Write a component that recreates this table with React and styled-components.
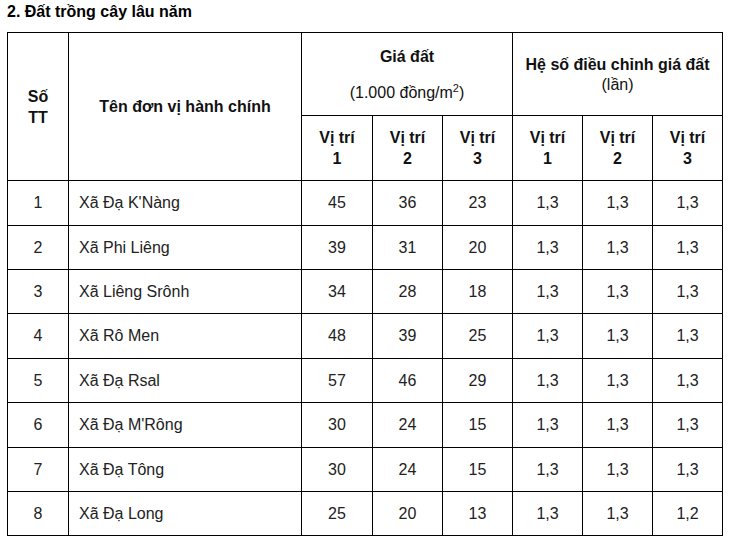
import React from "react";
import styled, { createGlobalStyle } from "styled-components";

const Global = createGlobalStyle`
  html, body { margin: 0; padding: 0; background: #fff; }
  body { font-family: "Liberation Sans", Arial, sans-serif; color: #111; }
`;

const Page = styled.div`
  padding: 3px 7px 0 7px;
`;

const Title = styled.div`
  font-size: 16px;
  font-weight: bold;
  line-height: 18px;
  color: #000;
  margin-bottom: 11px;
`;

const Table = styled.table`
  border-collapse: collapse;
  table-layout: fixed;
  width: 716px;
  font-size: 16px;
  color: #222;
`;

const HeadCell = styled.th`
  border: 1px solid #000;
  font-weight: bold;
  color: #111;
  text-align: center;
  vertical-align: middle;
  line-height: 21px;
  padding: 0;
`;

const Sub = styled.div`
  font-weight: normal;
  line-height: 20px;
  margin-top: ${(p) => p.$gap || 0}px;
`;

const Sup = styled.sup`
  font-size: 11px;
  line-height: 0;
`;

const Row = styled.tr`
  height: ${(p) => p.$h}px;
`;

const Cell = styled.td`
  border: 1px solid #000;
  text-align: ${(p) => (p.$left ? "left" : "center")};
  padding: ${(p) => (p.$left ? "0 0 0 10px" : "0")};
  vertical-align: middle;
  line-height: 18px;
`;

const widths = [61, 233, 71, 70, 70, 70, 70, 70];

const data = [
  ["1", "Xã Đạ K'Nàng", "45", "36", "23", "1,3", "1,3", "1,3"],
  ["2", "Xã Phi Liêng", "39", "31", "20", "1,3", "1,3", "1,3"],
  ["3", "Xã Liêng Srônh", "34", "28", "18", "1,3", "1,3", "1,3"],
  ["4", "Xã Rô Men", "48", "39", "25", "1,3", "1,3", "1,3"],
  ["5", "Xã Đạ Rsal", "57", "46", "29", "1,3", "1,3", "1,3"],
  ["6", "Xã Đạ M'Rông", "30", "24", "15", "1,3", "1,3", "1,3"],
  ["7", "Xã Đạ Tông", "30", "24", "15", "1,3", "1,3", "1,3"],
  ["8", "Xã Đạ Long", "25", "20", "13", "1,3", "1,3", "1,2"],
];

const rowHeights = [45, 44, 44, 45, 44, 45, 44, 44];

export default function App() {
  return (
    <Page>
      <Global />
      <Title>2. Đất trồng cây lâu năm</Title>
      <Table>
        <colgroup>
          {widths.map((w, i) => (
            <col key={i} style={{ width: w }} />
          ))}
        </colgroup>
        <thead>
          <Row $h={83}>
            <HeadCell rowSpan={2}>
              Số
              <br />
              TT
            </HeadCell>
            <HeadCell rowSpan={2}>Tên đơn vị hành chính</HeadCell>
            <HeadCell colSpan={3}>
              <div>Giá đất</div>
              <Sub $gap={16}>
                (1.000 đồng/m<Sup>2</Sup>)
              </Sub>
            </HeadCell>
            <HeadCell colSpan={3}>
              <div>Hệ số điều chỉnh giá đất</div>
              <Sub>(lần)</Sub>
            </HeadCell>
          </Row>
          <Row $h={65}>
            {[1, 2, 3, 1, 2, 3].map((n, i) => (
              <HeadCell key={i}>
                Vị trí
                <br />
                {n}
              </HeadCell>
            ))}
          </Row>
        </thead>
        <tbody>
          {data.map((r, i) => (
            <Row key={i} $h={rowHeights[i]}>
              {r.map((v, j) => (
                <Cell key={j} $left={j === 1}>
                  {v}
                </Cell>
              ))}
            </Row>
          ))}
        </tbody>
      </Table>
    </Page>
  );
}
